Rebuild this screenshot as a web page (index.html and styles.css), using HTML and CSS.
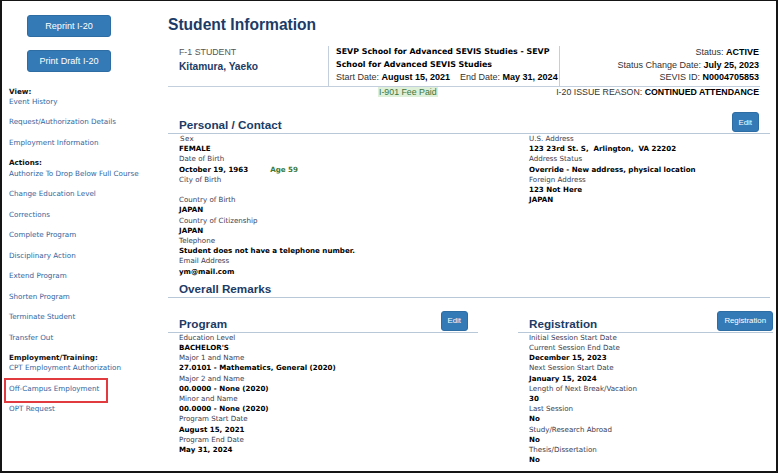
FILE: index.html
```html
<!DOCTYPE html>
<html>
<head>
<meta charset="utf-8">
<title>Student Information</title>
<link rel="stylesheet" href="styles.css">
</head>
<body>
<div class="frame">
  <aside class="sidebar">
    <button class="btn btn-lg">Reprint I-20</button>
    <button class="btn btn-lg">Print Draft I-20</button>
    <nav class="nav">
      <div class="nav-head">View:</div>
      <a class="nav-link" href="#">Event History</a>
      <a class="nav-link" href="#">Request/Authorization Details</a>
      <a class="nav-link" href="#">Employment Information</a>
      <div class="nav-head">Actions:</div>
      <a class="nav-link" href="#">Authorize To Drop Below Full Course</a>
      <a class="nav-link" href="#">Change Education Level</a>
      <a class="nav-link" href="#">Corrections</a>
      <a class="nav-link" href="#">Complete Program</a>
      <a class="nav-link" href="#">Disciplinary Action</a>
      <a class="nav-link" href="#">Extend Program</a>
      <a class="nav-link" href="#">Shorten Program</a>
      <a class="nav-link" href="#">Terminate Student</a>
      <a class="nav-link" href="#">Transfer Out</a>
      <div class="nav-head">Employment/Training:</div>
      <a class="nav-link" href="#">CPT Employment Authorization</a>
      <a class="nav-link flagged" href="#">Off-Campus Employment</a>
      <a class="nav-link" href="#">OPT Request</a>
    </nav>
  </aside>

  <main class="main">
    <h1 class="title">Student Information</h1>

    <div class="summary">
      <div class="sum-col sum-name">
        <div class="sum-type">F-1 STUDENT</div>
        <div class="sum-student">Kitamura, Yaeko</div>
      </div>
      <div class="sum-col sum-school">
        <div class="school-name">SEVP School for Advanced SEVIS Studies - SEVP</div>
        <div class="school-name">School for Advanced SEVIS Studies</div>
        <div>Start Date: <b>August 15, 2021</b>&nbsp;&nbsp;&nbsp; End Date: <b>May 31, 2024</b></div>
      </div>
      <div class="sum-col sum-status">
        <div>Status: <b>ACTIVE</b></div>
        <div>Status Change Date: <b>July 25, 2023</b></div>
        <div>SEVIS ID: <b>N0004705853</b></div>
      </div>
    </div>
    <div class="sub-row">
      <span class="fee">I-901 Fee Paid</span>
      <span class="reason">I-20 ISSUE REASON: <b>CONTINUED ATTENDANCE</b></span>
    </div>

    <section class="section">
      <div class="sec-head sec-head-personal">
        <h2>Personal / Contact</h2>
        <button class="btn btn-sm">Edit</button>
      </div>
      <div class="fields fields-personal">
        <div class="field-col">
          <div class="label label-sex">Sex</div>
          <div class="value">FEMALE</div>
          <div class="label">Date of Birth</div>
          <div class="value">October 19, 1963<span class="age">Age 59</span></div>
          <div class="label">City of Birth</div>
          <div class="value">&nbsp;</div>
          <div class="label">Country of Birth</div>
          <div class="value">JAPAN</div>
          <div class="label">Country of Citizenship</div>
          <div class="value">JAPAN</div>
          <div class="label">Telephone</div>
          <div class="value">Student does not have a telephone number.</div>
          <div class="label">Email Address</div>
          <div class="value">ym@mail.com</div>
        </div>
        <div class="field-col">
          <div class="label">U.S. Address</div>
          <div class="value">123 23rd St. S,&nbsp; Arlington,&nbsp; VA 22202</div>
          <div class="label">Address Status</div>
          <div class="value">Override - New address, physical location</div>
          <div class="label">Foreign Address</div>
          <div class="value">123 Not Here</div>
          <div class="value">JAPAN</div>
        </div>
      </div>
    </section>

    <section class="section">
      <div class="sec-head sec-head-remarks">
        <h2>Overall Remarks</h2>
      </div>
    </section>

    <div class="two-col">
      <section class="section">
        <div class="sec-head sec-head-program">
          <h2>Program</h2>
          <button class="btn btn-sm">Edit</button>
        </div>
        <div class="fields">
          <div class="label">Education Level</div>
          <div class="value">BACHELOR'S</div>
          <div class="label">Major 1 and Name</div>
          <div class="value">27.0101 - Mathematics, General (2020)</div>
          <div class="label">Major 2 and Name</div>
          <div class="value">00.0000 - None (2020)</div>
          <div class="label">Minor and Name</div>
          <div class="value">00.0000 - None (2020)</div>
          <div class="label">Program Start Date</div>
          <div class="value">August 15, 2021</div>
          <div class="label">Program End Date</div>
          <div class="value">May 31, 2024</div>
        </div>
      </section>
      <section class="section">
        <div class="sec-head sec-head-reg">
          <h2>Registration</h2>
          <button class="btn btn-sm">Registration</button>
        </div>
        <div class="fields">
          <div class="label">Initial Session Start Date</div>
          <div class="label">Current Session End Date</div>
          <div class="value">December 15, 2023</div>
          <div class="label">Next Session Start Date</div>
          <div class="value">January 15, 2024</div>
          <div class="label">Length of Next Break/Vacation</div>
          <div class="value">30</div>
          <div class="label">Last Session</div>
          <div class="value">No</div>
          <div class="label">Study/Research Abroad</div>
          <div class="value">No</div>
          <div class="label">Thesis/Dissertation</div>
          <div class="value">No</div>
        </div>
      </section>
    </div>
  </main>
</div>
</body>
</html>
```

FILE: styles.css
```css
* { box-sizing: border-box; }

html, body {
  margin: 0;
  padding: 0;
  background: #fff;
}

body {
  font-family: "DejaVu Sans", Verdana, sans-serif;
  font-size: 7.1px;
  line-height: 10.2px;
  color: #000;
}

.frame {
  width: 778px;
  height: 473px;
  border-style: solid;
  border-color: #151515;
  border-width: 1px 2px 2px 2px;
  display: flex;
  overflow: hidden;
}

/* ---------- sidebar ---------- */
.sidebar {
  width: 166px;
  flex: none;
  padding: 14px 0 0 7px;
  font-size: 7.2px;
}

.btn {
  display: block;
  background: #337ab7;
  color: #fff;
  border: 1px solid #2e6da4;
  border-radius: 3px;
  font-family: "Liberation Sans", Arial, sans-serif;
  padding: 0;
  text-align: center;
  cursor: pointer;
}

.btn-lg {
  width: 84px;
  height: 22px;
  font-size: 9.1px;
  margin-left: 18px;
}

.btn-lg + .btn-lg { margin-top: 13px; }

.btn-sm {
  height: 20px;
  padding: 0 6px;
  font-size: 7.8px;
  margin-bottom: 1px;
}

.nav { margin-top: 14.6px; }

.nav-head {
  font-weight: bold;
  color: #111;
  line-height: 10.25px;
}

.nav-link {
  display: block;
  color: #34659c;
  text-decoration: none;
  line-height: 10.25px;
  margin-bottom: 10.25px;
}

.nav-link.flagged { position: relative; }

.nav-link.flagged::after {
  content: "";
  position: absolute;
  left: -5px;
  top: -5.5px;
  width: 100px;
  height: 21px;
  border: 2px solid #e23b3f;
}

/* ---------- main ---------- */
.main {
  flex: 1;
  min-width: 0;
  padding-right: 6px;
}

.title {
  margin: 12.5px 0 0;
  font: bold 15.6px/21px "Liberation Sans", Arial, sans-serif;
  color: #1c3b66;
}

.summary {
  display: flex;
  width: 592px;
  margin-top: 9.5px;
  padding-top: 2px;
  border-bottom: 1px solid #c3cfdc;
  font-family: "Liberation Sans", Arial, sans-serif;
  font-size: 9px;
  line-height: 12.5px;
  color: #333;
}

.summary b { color: #000; }

.sum-col { padding-bottom: 2.5px; }

.sum-name {
  width: 161px;
  padding-left: 11px;
  border-right: 1px solid #c3cfdc;
}

.sum-type { color: #555; font-size: 8.8px; }

.sum-student {
  font-weight: bold;
  font-size: 10.2px;
  line-height: 15px;
  color: #1c3b66;
}

.sum-school {
  width: 231px;
  padding-left: 7px;
  border-right: 1px solid #c3cfdc;
}

.school-name {
  font-family: "DejaVu Sans", Verdana, sans-serif;
  font-weight: bold;
  font-size: 7.9px;
  color: #000;
}

.sum-status {
  flex: 1;
  text-align: right;
  padding-right: 1px;
}

.sub-row {
  display: flex;
  align-items: center;
  width: 592px;
  height: 10px;
  font-family: "Liberation Sans", Arial, sans-serif;
  font-size: 8.8px;
  line-height: 10px;
  color: #333;
}

.sub-row b { color: #000; }

.fee {
  margin-left: 210px;
  padding: 0 1px;
  background: #dff0d8;
  color: #3c763d;
}

.reason {
  margin-left: auto;
  padding-right: 1px;
}

/* ---------- sections ---------- */
.sec-head {
  display: flex;
  justify-content: space-between;
  align-items: flex-end;
  border-bottom: 1px solid #b9c8d8;
}

.sec-head h2 {
  margin: 0;
  padding-bottom: 1px;
  font: bold 11.7px/14px "Liberation Sans", Arial, sans-serif;
  color: #1c3b66;
}

.sec-head-personal { margin-top: 15px; padding: 0 11px; }
.sec-head-remarks { margin-top: 5px; padding: 0 11px; }
.sec-head-program { padding: 0 10px 0 11px; }
.sec-head-reg { padding: 0 0 0 11px; }

.fields { padding-left: 11px; }

.fields-personal {
  display: grid;
  grid-template-columns: 350px 1fr;
}

.label { color: #3b3b4f; }
.label-sex { padding-left: 1px; letter-spacing: 0.4px; }
.value { font-weight: bold; color: #000; }

.age {
  margin-left: 22px;
  color: #3a7a3a;
}

.two-col {
  display: grid;
  grid-template-columns: 310px 255px;
  column-gap: 40px;
  margin-top: 13px;
}
```
